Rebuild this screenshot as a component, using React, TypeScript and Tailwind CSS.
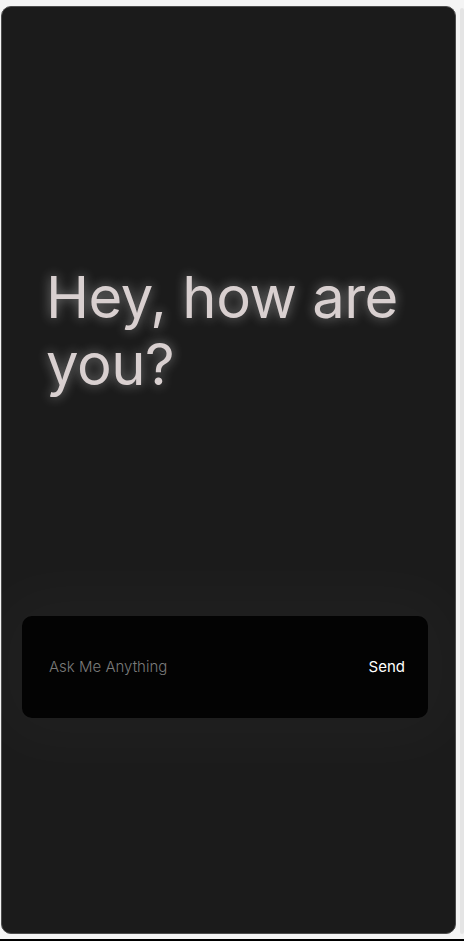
import React from "react";

const App = () => {
  return (
    <div className="h-[941px] w-[464px] bg-[#f4f4f4] overflow-hidden flex flex-col font-['Inter',sans-serif]">
      <div className="flex flex-1 pt-[6px]">
        {/* Chat card */}
        <div className="ml-[1px] w-[455px] h-[928px] rounded-[10px] border border-[#4d4d4d] bg-[#1b1b1b] flex flex-col">
          {/* Greeting */}
          <h1 className="mt-[257px] ml-[44px] text-[58px] leading-[67px] font-normal tracking-[-0.5px] text-[#d9d0d0] [text-shadow:0_0_12px_rgba(255,255,255,0.45)]">
            Hey, how are
            <br />
            you?
          </h1>

          {/* Prompt box */}
          <div className="mt-[218px] ml-[20px] w-[406px] h-[102px] rounded-[10px] bg-[#030303] flex items-center justify-between pl-[27px] pr-[23px] shadow-[0_0_70px_30px_rgba(255,255,255,0.025)]">
            <span className="text-[15px] font-light text-[#7a7a7a]">Ask Me Anything</span>
            <span className="text-[15px] text-white">Send</span>
          </div>
        </div>
        <div className="ml-[4px] mt-[2px] w-[4px] h-[926px] rounded-[2px] bg-[#e4e4e4]" />
      </div>
      <div className="h-[2px] bg-black" />
    </div>
  );
};

export default App;
